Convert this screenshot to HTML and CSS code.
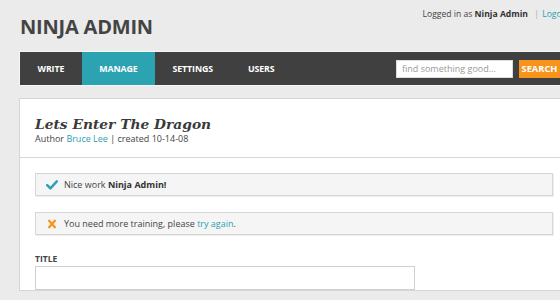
FILE: index.html
```html
<!DOCTYPE html>
<html>
<head>
<meta charset="utf-8">
<link rel="stylesheet" href="styles.css">
</head>
<body>
<div class="page">
  <header class="top">
    <h1 class="brand">NINJA ADMIN</h1>
    <div class="userbar">Logged in as <b>Ninja Admin</b> <span class="sep">|</span> <a href="#">Logout</a></div>
  </header>
  <nav class="nav">
    <a class="nav-item" href="#">WRITE</a>
    <a class="nav-item active" href="#">MANAGE</a>
    <a class="nav-item" href="#">SETTINGS</a>
    <a class="nav-item" href="#">USERS</a>
    <form class="search">
      <input class="search-input" type="text" placeholder="find something good...">
      <button class="search-btn" type="button">SEARCH</button>
    </form>
  </nav>
  <section class="panel">
    <div class="panel-head">
      <h2 class="post-title">Lets Enter The Dragon</h2>
      <p class="meta">Author <a href="#">Bruce Lee</a> | created 10-14-08</p>
    </div>
    <div class="panel-body">
      <div class="msg">
        <svg class="icon" width="12" height="10" viewBox="0 0 12 10"><path d="M1.2 5.2 L4.4 8.4 L10.8 1.4" fill="none" stroke="#2ba3b1" stroke-width="2.5" stroke-linecap="round" stroke-linejoin="round"/></svg>
        <span>Nice work <b>Ninja Admin!</b></span>
      </div>
      <div class="msg">
        <svg class="icon icon-x" width="10" height="10" viewBox="0 0 10 10"><path d="M1.5 1 L8.5 9 M8.5 1 L1.5 9" fill="none" stroke="#f7941e" stroke-width="2.3" stroke-linecap="butt"/></svg>
        <span>You need more training, please <a href="#">try again</a>.</span>
      </div>
      <label class="field-label">TITLE</label>
      <input class="field" type="text">
    </div>
  </section>
</div>
</body>
</html>
```

FILE: styles.css
```css
html, body {
  margin: 0;
  padding: 0;
  overflow: hidden;
  background: #ebebeb;
  font-family: "Open Sans", "DejaVu Sans", sans-serif;
  color: #444;
}
a { color: #2a9fb0; text-decoration: none; }

.page {
  width: 550px;
  margin-left: 19px;
}

.top {
  display: flex;
  justify-content: space-between;
  align-items: flex-start;
  height: 51px;
}
.brand {
  margin: 17px 0 0 1px;
  font-size: 20px;
  line-height: 20px;
  font-weight: 700;
  color: #444;
  letter-spacing: -0.2px;
}
.userbar {
  margin-top: 8px;
  margin-right: -1px;
  font-size: 8.6px;
  line-height: 12px;
  color: #444;
}
.userbar b { font-weight: 700; color: #333; }
.userbar .sep { color: #aaa; margin: 0 1px 0 4px; }

.nav {
  display: flex;
  align-items: stretch;
  height: 33px;
  background: #404040;
  border: 1px solid #f7f7f7;
  padding-right: 8px;
}
.nav-item {
  display: flex;
  align-items: center;
  padding: 0 17.5px;
  color: #fff;
  font-size: 8.8px;
  font-weight: 700;
  letter-spacing: -0.1px;
}
.nav-item.active { background: #2ba3b1; }

.search {
  margin: 0 0 0 auto;
  display: flex;
  align-items: center;
  gap: 6px;
}
.search-input {
  box-sizing: border-box;
  width: 117px;
  height: 18px;
  margin: 0;
  border: 1px solid #ddd;
  background: #fff;
  padding: 0 5px;
  font-family: "Open Sans", sans-serif;
  font-size: 9px;
  color: #999;
  outline: none;
}
.search-input::placeholder { color: #999; }
.search-btn {
  box-sizing: border-box;
  height: 18px;
  width: 41px;
  margin: 0;
  border: 0;
  padding: 0;
  background: #f7941e;
  color: #fff;
  font-family: "Open Sans", sans-serif;
  font-size: 9.3px;
  font-weight: 700;
}

.panel {
  margin-top: 12px;
  background: #fff;
  border: 1px solid #d6d6d6;
}
.panel-head {
  padding: 16px 15px 0 15px;
  height: 42px;
  border-bottom: 1px solid #d6d6d6;
}
.post-title {
  margin: 0;
  font-family: "DejaVu Serif", Georgia, serif;
  font-style: italic;
  font-weight: 700;
  font-size: 13.8px;
  line-height: 18px;
  color: #3a3a3a;
}
.meta {
  margin: 0;
  font-size: 9px;
  line-height: 12px;
  color: #444;
}

.panel-body {
  padding: 15px 15px 0 15px;
}
.msg {
  box-sizing: border-box;
  width: 518px;
  height: 23px;
  display: flex;
  align-items: center;
  gap: 6px;
  padding-left: 10px;
  background: #f5f5f5;
  border: 1px solid #d6d6d6;
  box-shadow: 1px 1px 0 #eeeeee;
  font-size: 9px;
  color: #444;
  margin-bottom: 16px;
}
.msg b { color: #333; }
.icon { flex: none; }
.icon-x { margin-left: 1px; margin-right: 1px; }

.field-label {
  display: block;
  margin-top: 19px;
  font-size: 8.5px;
  line-height: 10px;
  font-weight: 700;
  color: #444;
}
.field {
  display: block;
  box-sizing: border-box;
  width: 380px;
  height: 24px;
  margin: 2px 0 0 0;
  border: 1px solid #d0d0d0;
  background: #fff;
  outline: none;
}
```
